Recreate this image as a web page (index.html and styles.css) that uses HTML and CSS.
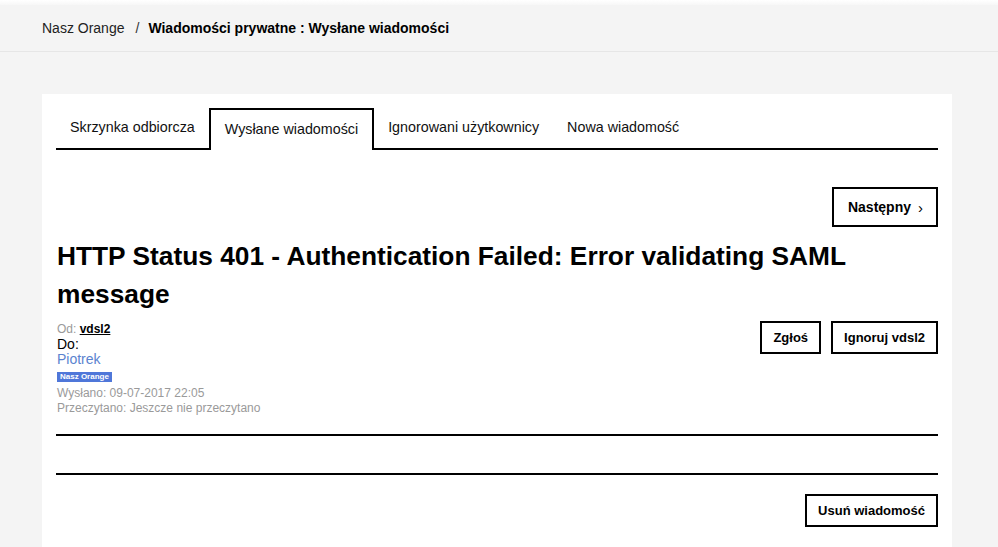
FILE: index.html
```html
<!DOCTYPE html>
<html lang="pl">
<head>
<meta charset="utf-8">
<title>Wiadomości prywatne</title>
<link rel="stylesheet" href="styles.css">
</head>
<body>
<div class="topstrip"></div>
<header class="crumbs">
  <a class="crumb-link" href="#">Nasz Orange</a>
  <span class="crumb-sep">/</span>
  <span class="crumb-current">Wiadomości prywatne : Wysłane wiadomości</span>
</header>
<main class="page">
  <section class="card">
    <nav class="tabs">
      <a class="tab" href="#">Skrzynka odbiorcza</a>
      <a class="tab active" href="#">Wysłane wiadomości</a>
      <a class="tab" href="#">Ignorowani użytkownicy</a>
      <a class="tab" href="#">Nowa wiadomość</a>
    </nav>
    <div class="pager">
      <a class="btn btn-next" href="#">Następny <span class="chev">›</span></a>
    </div>
    <h1 class="subject">HTTP Status 401 - Authentication Failed: Error validating SAML message</h1>
    <div class="meta-row">
      <div class="meta">
        <div class="from"><span class="grey">Od:</span> <a class="author" href="#">vdsl2</a></div>
        <div class="to">Do:</div>
        <a class="recipient" href="#">Piotrek</a>
        <div class="badge-row"><span class="badge">Nasz Orange</span></div>
        <div class="grey">Wysłano: 09-07-2017 22:05</div>
        <div class="grey">Przeczytano: Jeszcze nie przeczytano</div>
      </div>
      <div class="actions">
        <a class="btn btn-sm" href="#">Zgłoś</a>
        <a class="btn btn-sm" href="#">Ignoruj vdsl2</a>
      </div>
    </div>
    <div class="body-sep first"></div>
    <div class="body-sep second"></div>
    <div class="footer-actions">
      <a class="btn btn-sm" href="#">Usuń wiadomość</a>
    </div>
  </section>
</main>
</body>
</html>
```
FILE: styles.css
```css
* { box-sizing: border-box; }
html, body { margin: 0; padding: 0; }
body {
  background: #f4f4f4;
  font-family: "Liberation Sans", Arial, sans-serif;
  color: #000;
  height: 547px;
  overflow: hidden;
}
a { text-decoration: none; color: inherit; }

.topstrip {
  height: 5px;
  background: linear-gradient(#ffffff, #f7f7f7);
}
.crumbs {
  height: 47px;
  background: #f4f4f4;
  border-bottom: 1px solid #e6e6e6;
  display: flex;
  align-items: center;
  padding: 0 0 0 42px;
  font-size: 14px;
  color: #222;
}
.crumb-sep { margin: 0 9px 0 11px; color: #333; }
.crumb-current { font-weight: bold; color: #000; }

.page {
  padding: 42px 46px 0 42px;
}
.card {
  background: #fff;
  padding: 14px 14px 20px 14px;
  min-height: 460px;
}

.tabs {
  display: flex;
  border-bottom: 2px solid #000;
  height: 42px;
}
.tab {
  font-size: 14.3px;
  color: #111;
  padding: 11px 14px 0 14px;
  height: 40px;
}
.tab.active {
  border: 2px solid #000;
  border-bottom: none;
  height: 42px;
  background: #fff;
  margin-bottom: -2px;
  padding: 11px 14px 0 14px;
}

.pager {
  display: flex;
  justify-content: flex-end;
  margin-top: 37px;
}
.btn {
  display: inline-flex;
  align-items: center;
  justify-content: center;
  border: 2px solid #000;
  font-weight: bold;
  color: #000;
  background: #fff;
}
.btn-next {
  height: 40px;
  padding: 0 13px 0 14px;
  font-size: 14px;
}
.chev { font-weight: normal; margin-left: 7px; font-size: 15px; }

.subject {
  margin: 10px 0 0 1px;
  font-size: 26.3px;
  line-height: 38px;
  font-weight: bold;
}

.meta-row {
  display: flex;
  justify-content: space-between;
  align-items: flex-start;
  margin-top: 9px;
}
.meta {
  font-size: 12px;
  line-height: 15px;
  padding-left: 1px;
}
.grey { color: #9a9a9a; }
.author { color: #000; font-weight: bold; text-decoration: underline; }
.to { font-size: 14px; line-height: 15px; color: #000; }
.recipient { display: block; font-size: 14px; line-height: 15px; color: #5b83cf; }
.badge-row { height: 19px; padding-top: 1px; }
.badge {
  display: inline-block;
  background: #4f77d9;
  color: #fff;
  font-size: 8px;
  font-weight: bold;
  line-height: 10px;
  padding: 0 3px;
}
.actions {
  display: flex;
  gap: 10px;
  margin-top: -1px;
}
.btn-sm {
  height: 33px;
  padding: 0 11px;
  font-size: 13px;
}

.body-sep {
  height: 2px;
  background: #000;
}
.body-sep.first { margin-top: 18px; }
.body-sep.second { margin-top: 37px; }

.footer-actions {
  display: flex;
  justify-content: flex-end;
  margin-top: 19px;
}
```
